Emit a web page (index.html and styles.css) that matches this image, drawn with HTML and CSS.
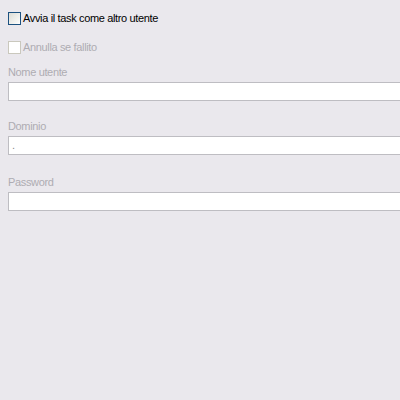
FILE: index.html
```html
<!DOCTYPE html>
<html>
<head>
<meta charset="utf-8">
<link rel="stylesheet" href="styles.css">
</head>
<body>
<div class="form">
  <label class="check">
    <span class="box box-active"></span>
    <span class="check-text">Avvia il task come altro utente</span>
  </label>
  <label class="check check-disabled">
    <span class="box box-disabled"></span>
    <span class="check-text">Annulla se fallito</span>
  </label>
  <div class="field field-user">
    <div class="label">Nome utente</div>
    <div class="input"></div>
  </div>
  <div class="field field-domain">
    <div class="label">Dominio</div>
    <div class="input">.</div>
  </div>
  <div class="field field-pass">
    <div class="label">Password</div>
    <div class="input"></div>
  </div>
</div>
</body>
</html>
```
FILE: styles.css
```css
html, body {
  margin: 0;
  padding: 0;
  background: #eae8ed;
  width: 400px;
  height: 400px;
  overflow: hidden;
}
body {
  font-family: "Liberation Sans", Arial, sans-serif;
  font-size: 11px;
  letter-spacing: -0.35px;
  color: #000;
}
.form {
  padding: 12px 0 0 8px;
  display: flex;
  flex-direction: column;
}
.check {
  display: flex;
  align-items: center;
  height: 13px;
  gap: 2px;
}
.check-disabled {
  margin-top: 16px;
}
.box {
  box-sizing: border-box;
  width: 13px;
  height: 13px;
  flex: none;
}
.box-active {
  border: 1px solid #1c5180;
  background: linear-gradient(135deg, #dcdcd5 0%, #f4f4f1 70%, #ffffff 100%);
}
.box-disabled {
  border: 1px solid #cac8bd;
  background: #fff;
}
.check-text {
  line-height: 13px;
}
.check-disabled .check-text {
  color: #aeacb2;
}
.field {
  display: flex;
  flex-direction: column;
}
.field-user {
  margin-top: 12px;
}
.field-domain {
  margin-top: 19px;
}
.field-pass {
  margin-top: 21px;
}
.label {
  color: #aeacb2;
  height: 13px;
  line-height: 13px;
  margin-bottom: 3px;
}
.input {
  box-sizing: border-box;
  height: 19px;
  width: 420px;
  background: #fff;
  border: 1px solid #bebdc2;
  padding: 0 0 0 3px;
  line-height: 17px;
  color: #8a8a8a;
}
```
